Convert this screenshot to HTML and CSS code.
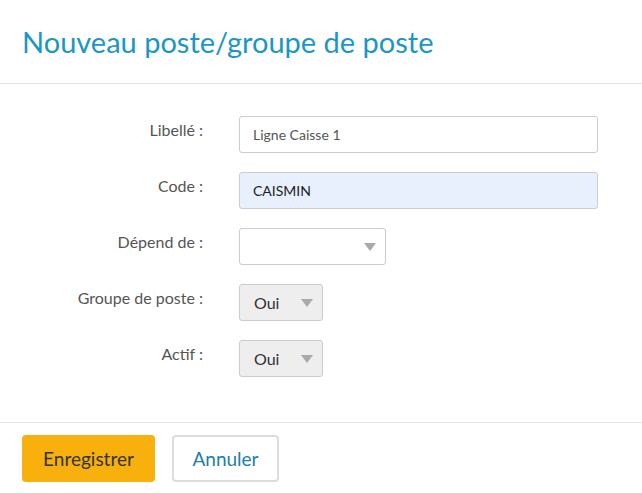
FILE: index.html
```
<!DOCTYPE html>
<html lang="fr">
<head>
<meta charset="UTF-8">
<title>Nouveau poste/groupe de poste</title>
<link rel="stylesheet" href="styles.css">
</head>
<body>
<div class="modal">
	<div class="modal-head">
		<h1>Nouveau poste/groupe de poste</h1>
	</div>
	<div class="modal-body">
		<div class="row">
			<label for="libelle">Libellé :</label>
			<input type="text" id="libelle" class="field wide" value="Ligne Caisse 1">
		</div>
		<div class="row">
			<label for="code">Code :</label>
			<input type="text" id="code" class="field wide filled" value="CAISMIN">
		</div>
		<div class="row">
			<label>Dépend de :</label>
			<div class="select mid"><span></span><i class="caret"></i></div>
		</div>
		<div class="row">
			<label>Groupe de poste :</label>
			<div class="select small off"><span>Oui</span><i class="caret"></i></div>
		</div>
		<div class="row">
			<label>Actif :</label>
			<div class="select small off"><span>Oui</span><i class="caret"></i></div>
		</div>
	</div>
	<div class="modal-foot">
		<button class="btn save">Enregistrer</button>
		<button class="btn cancel">Annuler</button>
	</div>
</div>
</body>
</html>
```
FILE: styles.css
```
body{
	margin:0;
	background:#fff;
	font-family:Lato,"Open Sans",sans-serif;
}
.modal{
	width:642px;
}
.modal-head{
	height:84px;
	border-bottom:1px solid #e5e5e5;
	padding:0 22px;
	box-sizing:border-box;
}
.modal-head h1{
	margin:0;
	padding-top:23px;
	font-size:29px;
	font-weight:normal;
	color:#1b96c6;
	line-height:38px;
}
.modal-body{
	padding:32px 0 45px;
}
.row{
	display:flex;
	align-items:center;
	margin-bottom:19px;
}
.row:last-child{
	margin-bottom:0;
}
label{
	display:inline-block;
	width:203px;
	margin-right:36px;
	text-align:right;
	font-size:16px;
	color:#555;
	align-self:flex-start;
	padding-top:4px;
}
.field{
	height:37px;
	box-sizing:border-box;
	border:1px solid #ccc;
	border-radius:3px;
	padding:0 13px;
	font-family:Lato,"Open Sans",sans-serif;
	font-size:14px;
	color:#555;
	outline:none;
	margin:0;
}
.wide{
	width:359px;
}
.filled{
	background:#e8f0fe;
	color:#222;
}
.select{
	display:flex;
	align-items:center;
	justify-content:space-between;
	height:37px;
	box-sizing:border-box;
	border:1px solid #ccc;
	border-radius:3px;
	padding:0 9px 0 14px;
	font-size:16px;
	color:#333;
}
.mid{
	width:147px;
}
.small{
	width:84px;
}
.off{
	background:#eee;
}
.caret{
	display:inline-block;
	width:0;
	height:0;
	border-left:6px solid transparent;
	border-right:6px solid transparent;
	border-top:8px solid #aaa;
	margin-top:1px;
}
.modal-foot{
	border-top:1px solid #e5e5e5;
	padding:12px 22px;
	display:flex;
	gap:17px;
}
.btn{
	height:47px;
	border-radius:4px;
	font-family:Lato,"Open Sans",sans-serif;
	font-size:19px;
	cursor:pointer;
	margin:0;
}
.save{
	width:133px;
	background:#f8b00d;
	border:0;
	color:#333;
}
.cancel{
	width:107px;
	background:#fff;
	border:2px solid #ddd;
	color:#1a80a8;
}
```
